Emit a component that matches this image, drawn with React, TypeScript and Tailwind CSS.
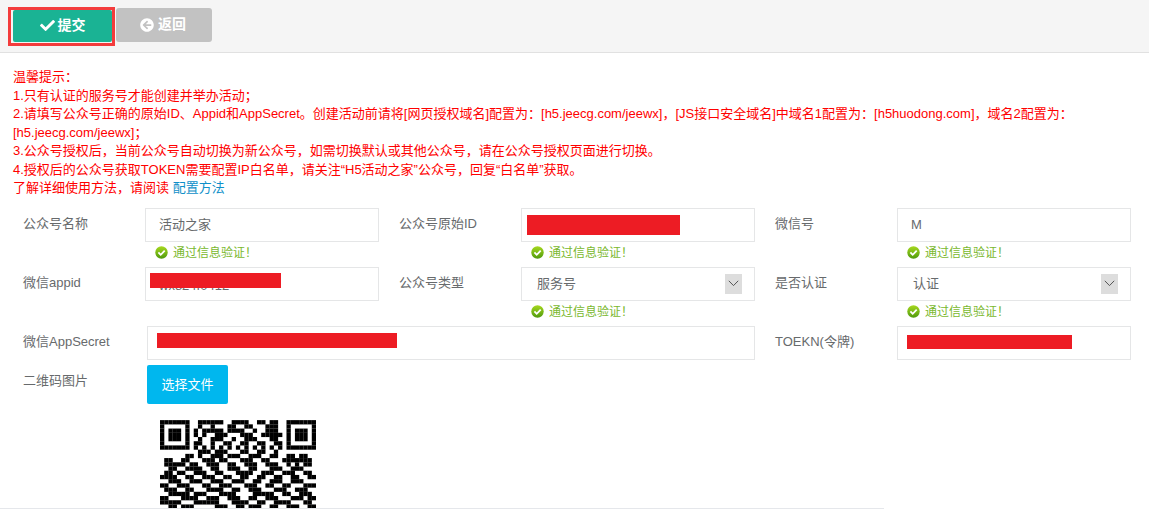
import { FaArrowCircleLeft, FaCheck } from "react-icons/fa";

const font = "font-['Liberation_Sans','Noto_Sans_CJK_SC',sans-serif]";

const qrRows = [
  "0000000" + "00111111001111001101100",
  "0000000" + "00100100011001100011100",
  "0000000" + "01011111011110010011100",
  "0000000" + "01010011100011100111110",
  "0000000" + "00100111001001110001100",
  "0000000" + "01100100110011001100110",
  "0000000" + "01010101010101010101010",
  "0000000" + "00111011100011001100100",
  "0000001101001110111001110011001101100",
  "0110011000111011000111001100011111110",
  "0111110110011100110011100111001010110",
  "0011001111001100111001100011100111000",
  "0110110011100110001111001110011100110",
  "1111001100111001100110011001100110011",
  "0011100111001110011100110011100111000",
  "1100111000110011100011100110011000111",
  "0111001100011110011001110001110011100",
  "0011111011100011110000111110011001110",
  "1100011110011100111001100111000111011",
  "1111100011111100011110011001111000110",
  "0011011100000111001101110011001110011",
  "1100001101100011100111000110011001101",
];

function isFinder(r: number, c: number) {
  const cell = (x: number, y: number) => {
    if (x < 0 || y < 0 || x > 6 || y > 6) return null;
    const ring = x === 0 || y === 0 || x === 6 || y === 6;
    const core = x >= 2 && x <= 4 && y >= 2 && y <= 4;
    return ring || core;
  };
  return cell(c, r) ?? cell(c - 30, r);
}

function QrCode() {
  const cells: { r: number; c: number }[] = [];
  qrRows.forEach((row, r) => {
    for (let c = 0; c < 37; c++) {
      const f = isFinder(r, c);
      if (f === true || (f === null && row[c] === "1")) cells.push({ r, c });
    }
  });
  return (
    <svg width="156" height="93" viewBox="0 0 37 22" className="block">
      {cells.map(({ r, c }) => (
        <rect key={`${r}-${c}`} x={c} y={r} width="1.02" height="1.02" fill="#000" />
      ))}
    </svg>
  );
}

function OkHint() {
  return (
    <div className="ml-[10px] mt-[3px] flex h-[16px] items-center text-[12px] text-[#7ab82e]">
      <svg width="13" height="13" viewBox="0 0 13 13" className="mr-[5px] shrink-0">
        <defs>
          <linearGradient id="ok" x1="0" y1="0" x2="0" y2="1">
            <stop offset="0" stopColor="#a6d81e" />
            <stop offset="1" stopColor="#4f9a0e" />
          </linearGradient>
        </defs>
        <circle cx="6.5" cy="6.5" r="6.2" fill="url(#ok)" />
        <path d="M3.4 6.4 5.7 8.8 9.7 4.6" fill="none" stroke="#fff" strokeWidth="1.8" />
      </svg>
      通过信息验证！
    </div>
  );
}

function Label({ text }: { text: string }) {
  return <div className="pt-[7px] text-[13px] leading-[18px] text-[#676a6c]">{text}</div>;
}

function Box({ value, select, bar, className }: { value?: string; select?: boolean; bar?: string; className?: string }) {
  return (
    <div className={`relative flex h-[34px] items-center border border-[#e5e6e7] bg-white text-[13px] text-[#676a6c] ${select ? "pl-[15px]" : "pl-[13px]"} ${className || ""}`}>
      {value}
      {select && (
        <span className="absolute right-[12px] top-[6px] flex h-[20px] w-[17px] items-center justify-center bg-[#dddddd]">
          <svg width="11" height="7" viewBox="0 0 11 7">
            <path d="M.8.8 5.5 5.6 10.2.8" fill="none" stroke="#555" strokeWidth="1" />
          </svg>
        </span>
      )}
      {bar && <span className={`absolute bg-[#ed1c24] ${bar}`} />}
    </div>
  );
}

export default function App() {
  return (
    <div className={`relative h-[509px] overflow-hidden bg-white ${font}`}>
      <div className="flex h-[53px] items-start border-b border-[#e1e1e1] bg-[#f5f5f5] pl-[8px] pt-[7px]">
        <div className="h-[39px] w-[107px] border-[3px] border-[#f33c3c] pl-[2px]">
          <button className="flex h-[32px] w-[99px] items-center justify-center gap-[3px] rounded-[2px] bg-[#1ab394] pb-[2px] text-[14px] font-bold text-white">
            <FaCheck className="h-[15px] w-[15px]" />
            提交
          </button>
        </div>
        <button className="ml-px mt-px flex h-[34px] w-[96px] items-center justify-center gap-[4px] rounded-[3px] bg-[#c2c2c2] pb-[1px] pr-[2px] text-[14px] font-bold text-white">
          <FaArrowCircleLeft className="h-[14px] w-[14px]" />
          返回
        </button>
      </div>

      <div className="px-[13px] pt-[15px] text-[13px] leading-[18.57px] whitespace-nowrap text-[#ff0000]">
        <div>温馨提示：</div>
        <div>1.只有认证的服务号才能创建并举办活动；</div>
        <div>2.请填写公众号正确的原始ID、Appid和AppSecret。创建活动前请将[网页授权域名]配置为：[h5.jeecg.com/jeewx]，[JS接口安全域名]中域名1配置为：[h5huodong.com]，域名2配置为：</div>
        <div>[h5.jeecg.com/jeewx]；</div>
        <div>3.公众号授权后，当前公众号自动切换为新公众号，如需切换默认或其他公众号，请在公众号授权页面进行切换。</div>
        <div>4.授权后的公众号获取TOKEN需要配置IP白名单，请关注“H5活动之家”公众号，回复“白名单”获取。</div>
        <div>
          了解详细使用方法，请阅读 <a className="text-[#0f8fc9]">配置方法</a>
        </div>
      </div>

      <div className="ml-[23px] mt-[10px] grid grid-cols-[122px_234px_142px_234px_142px_234px]">
        <Label text="公众号名称" />
        <div className="h-[59px]">
          <Box value="活动之家" />
          <OkHint />
        </div>
        <div className="pl-[20px]"><Label text="公众号原始ID" /></div>
        <div>
          <Box bar="left-[5px] top-[6px] h-[20px] w-[153px]" />
          <OkHint />
        </div>
        <div className="pl-[20px]"><Label text="微信号" /></div>
        <div>
          <Box value="M" />
          <OkHint />
        </div>

        <Label text="微信appid" />
        <div className="h-[59px]">
          <Box value="wx824f0412" className="pt-[3px]" bar="left-[4px] top-[5px] h-[15px] w-[131px]" />
        </div>
        <div className="pl-[20px]"><Label text="公众号类型" /></div>
        <div>
          <Box value="服务号" select />
          <OkHint />
        </div>
        <div className="pl-[20px]"><Label text="是否认证" /></div>
        <div>
          <Box value="认证" select />
          <OkHint />
        </div>

        <Label text="微信AppSecret" />
        <div className="col-span-3 h-[39px] pl-[2px]">
          <Box bar="left-[9px] top-[6px] h-[15px] w-[240px]" />
        </div>
        <div className="pl-[20px]"><Label text="TOEKN(令牌)" /></div>
        <div>
          <Box bar="left-[9px] top-[8px] h-[14px] w-[165px]" />
        </div>

        <Label text="二维码图片" />
        <div className="col-span-5 pl-[2px]">
          <button className="h-[39px] w-[81px] rounded-[2px] bg-[#00b7ee] text-[13px] text-white">选择文件</button>
          <div className="ml-[13px] mt-[16px]">
            <QrCode />
          </div>
        </div>
      </div>

      <div className="absolute bottom-0 left-0 h-px w-[884px] bg-[#e5e7eb]" />
    </div>
  );
}
